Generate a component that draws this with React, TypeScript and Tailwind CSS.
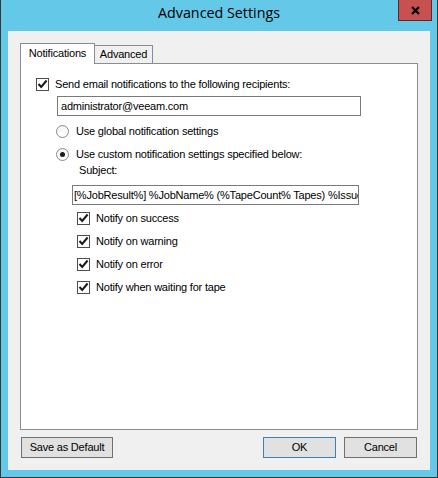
import React from "react";

const ui = "font-['Liberation_Sans',Arial,sans-serif] text-[11px] leading-[13px] tracking-[-0.2px] text-black";

function CheckBox() {
  return (
    <span className="flex h-[13px] w-[13px] shrink-0 items-center justify-center border border-[#4c4c4c] bg-white">
      <svg width="11" height="11" viewBox="0 0 11 11">
        <polyline points="1.5,5 4.2,8 9.6,1.5" fill="none" stroke="#1a1a1a" strokeWidth="2" />
      </svg>
    </span>
  );
}

function Radio({ checked }: { checked?: boolean }) {
  return (
    <span className="flex h-[13px] w-[13px] shrink-0 items-center justify-center rounded-full border border-[#8a8a8a] bg-gradient-to-b from-[#f4f4f4] to-white">
      {checked && <span className="h-[5px] w-[5px] rounded-full bg-[#1a1a1a]" />}
    </span>
  );
}

function CheckRow({ label, className }: { label: string; className?: string }) {
  return (
    <div className={`flex h-[13px] items-center gap-[6px] ${className ?? ""}`}>
      <CheckBox />
      <span className="whitespace-nowrap">{label}</span>
    </div>
  );
}

function Button({ label, width, primary }: { label: string; width: string; primary?: boolean }) {
  return (
    <button
      className={`flex h-[21px] ${width} items-center justify-center border bg-[#e1e1e1] ${
        primary ? "border-[#3c7fb1]" : "border-[#707070]"
      }`}
    >
      {label}
    </button>
  );
}

export default function App() {
  return (
    <div className={`flex h-[478px] w-[438px] flex-col border-x border-b border-[#383838] bg-[#64c9e9] ${ui}`}>
      {/* Title bar */}
      <div className="grid h-[31px] shrink-0 grid-cols-[1fr_auto_1fr]">
        <div />
        <div className="pt-[3px] font-['Open_Sans',sans-serif] text-[14.3px] leading-[20px] tracking-normal text-black">
          Advanced Settings
        </div>
        <div className="flex justify-end">
          <div className="mr-[5px] flex h-[21px] w-[34px] items-center justify-center border border-[#5a2a2a] border-t-0 bg-[#c75050]">
            <svg width="9" height="9" viewBox="0 0 9 9">
              <path d="M1 1 L8 8 M8 1 L1 8" stroke="#000" strokeWidth="2.2" />
            </svg>
          </div>
        </div>
      </div>

      {/* Client area */}
      <div className="mx-[7px] flex h-[439px] flex-col bg-[#f0f0f0] px-[12px] pt-[12px]">
        {/* Tabs */}
        <div className="flex h-[20px] items-end">
          <div className="relative z-10 -mb-px h-[21px] w-[75px] border-x border-t border-[#898c95] bg-white pt-[3px] text-center">
            Notifications
          </div>
          <div className="h-[18px] w-[58px] border-r border-t border-[#898c95] bg-[#f0f0f0] pt-[2px] text-center">
            Advanced
          </div>
        </div>

        {/* Panel */}
        <div className="flex h-[367px] flex-col border border-[#898c95] bg-white">
          <CheckRow label="Send email notifications to the following recipients:" className="ml-[15px] mt-[14px]" />
          <div className="ml-[36px] mt-[5px] flex h-[20px] w-[304px] items-center border border-[#7a7a7a] bg-white pl-[3px]">
            administrator@veeam.com
          </div>
          <div className="ml-[35px] mt-[9px] flex h-[13px] items-center gap-[7px]">
            <Radio />
            <span>Use global notification settings</span>
          </div>
          <div className="ml-[35px] mt-[10px] flex h-[13px] items-center gap-[7px]">
            <Radio checked />
            <span>Use custom notification settings specified below:</span>
          </div>
          <div className="ml-[58px] mt-[3px] h-[13px]">Subject:</div>
          <div className="ml-[51px] mt-[8px] flex h-[20px] w-[287px] items-center overflow-hidden whitespace-nowrap border border-[#7a7a7a] bg-white pl-[1px]">
            [%JobResult%] %JobName% (%TapeCount% Tapes) %Issues%
          </div>
          <div className="ml-[56px] mt-[7px] flex flex-col gap-[10px]">
            <CheckRow label="Notify on success" />
            <CheckRow label="Notify on warning" />
            <CheckRow label="Notify on error" />
            <CheckRow label="Notify when waiting for tape" />
          </div>
        </div>

        {/* Buttons */}
        <div className="mx-px mt-[7px] flex items-center">
          <Button label="Save as Default" width="w-[92px]" />
          <div className="flex-1" />
          <div className="flex gap-[8px]">
            <Button label="OK" width="w-[73px]" primary />
            <Button label="Cancel" width="w-[73px]" />
          </div>
        </div>
      </div>
    </div>
  );
}
